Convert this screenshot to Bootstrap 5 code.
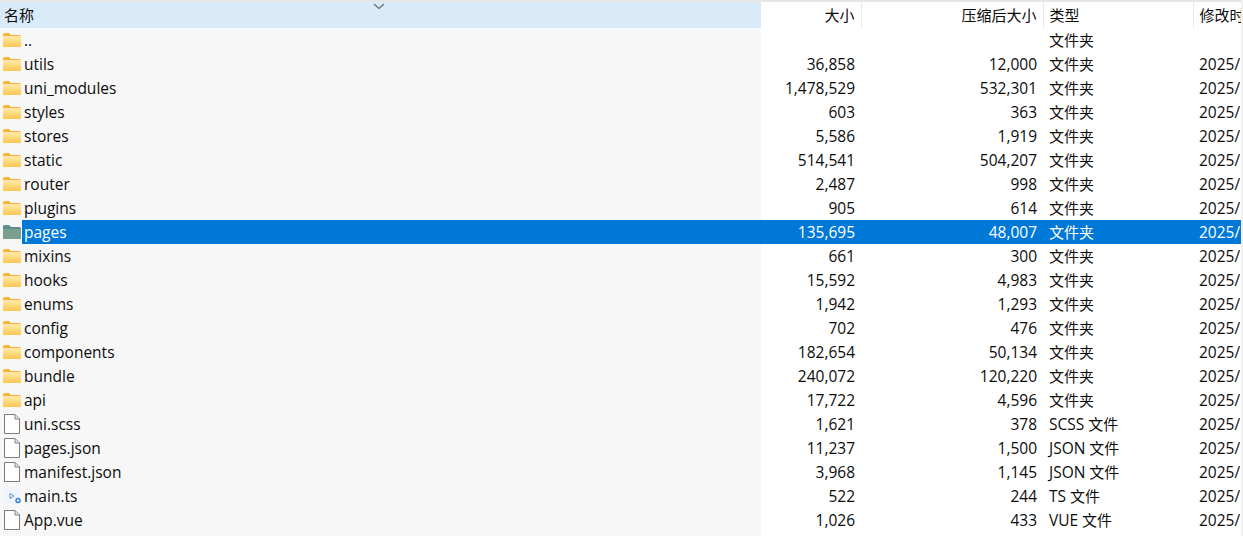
<!DOCTYPE html>
<html lang="zh-CN">
<head>
<meta charset="utf-8">
<title>压缩文件列表</title>
<link rel="stylesheet" href="https://cdn.jsdelivr.net/npm/bootstrap@5.3.0/dist/css/bootstrap.min.css">
<style>
html,body{height:536px;overflow:hidden;background:#fff}
body{font-family:"Open Sans","Noto Sans CJK SC",sans-serif;font-size:15px;color:#000}
.listing{width:1241px;table-layout:fixed;border-collapse:collapse;margin:0;position:relative}
.listing th,.listing td{padding:0 6px;height:24px;line-height:24px;white-space:nowrap;overflow:hidden;font-weight:400;border:0;background:transparent;color:#0c0c0c}
.listing col.c-name{width:761px}.listing col.c-size{width:100px}.listing col.c-comp{width:182px}.listing col.c-type{width:150px}.listing col.c-date{width:48px}
.listing thead th{height:26px;line-height:26px;border-right:1px solid #e8e8e8}
.listing thead th:last-child{border-right:0}
.listing thead th.h-name{background:#d9ebf9;border-right:0;padding-left:4px;position:relative}
.top-rule{height:2px;background:#e5e5e5;width:1241px}
.listing td.n{background:#f7f7f7;padding:0}
.listing td.num,.listing td.dt,.nm,.lat{font-size:15.5px}
.cellin{display:flex;align-items:center;height:24px}
.ico{width:22px;flex:none;display:flex;justify-content:flex-start;padding-left:3px}
.nm{padding-left:2px}
.num{text-align:right}
.listing tr.sel td{background:#0078d7;color:#fff}
.listing tr.sel td.n{background:linear-gradient(to right,#f7f7f7 22px,#0078d7 22px)}
.sort{position:absolute;left:373px;top:1px}
.edge{position:absolute;left:1241px;top:0;width:2px;height:536px;background:#f0f0f0}
</style>
</head>
<body>
<svg width="0" height="0" class="d-block position-absolute">
<defs>
<linearGradient id="fg" x1="0" y1="0" x2="0" y2="1"><stop offset="0" stop-color="#ffe9a6"/><stop offset="1" stop-color="#fcc64e"/></linearGradient>
<symbol id="folder" viewBox="0 0 18 16">
<path d="M0 2.5Q0 1 1.5 1H6L8 3H16.5Q18 3 18 4.5V14Q18 15 17 15H1Q0 15 0 14Z" fill="#f6b73c"/>
<path d="M0 5H18V14Q18 15 17 15H1Q0 15 0 14Z" fill="url(#fg)"/>
<path d="M0 4.6H18" stroke="#fff3c9" stroke-width=".8"/>
</symbol>
<symbol id="folder-sel" viewBox="0 0 18 16">
<path d="M0 2.5Q0 1 1.5 1H6L8 3H16.5Q18 3 18 4.5V14Q18 15 17 15H1Q0 15 0 14Z" fill="#5f8d8e"/>
<path d="M0 5H18V14Q18 15 17 15H1Q0 15 0 14Z" fill="#7b9f8f"/>
</symbol>
<symbol id="doc" viewBox="0 0 18 20">
<path d="M1.5.5H12L16.5 5V19.5H1.5Z" fill="#fff" stroke="#7d7d7d"/>
<path d="M12 .5V5H16.5" fill="none" stroke="#7d7d7d"/>
</symbol>
<symbol id="ts" viewBox="0 0 18 20">
<path d="M1 1H13L17 5V18H1Z" fill="#f0f5fc"/>
<path d="M7 7.5L11 10L7 12.5Z" fill="none" stroke="#5b8fd6"/>
<circle cx="15" cy="14.5" r="2" fill="#fff" stroke="#2f7bd9" stroke-width="1.4"/>
</symbol>
</defs>
</svg>
<div class="top-rule"></div>
<table class="table table-borderless listing">
<colgroup><col class="c-name"><col class="c-size"><col class="c-comp"><col class="c-type"><col class="c-date"></colgroup>
<thead>
<tr>
<th class="h-name">名称<svg class="sort" width="12" height="7" viewBox="0 0 12 7"><path d="M1 1L6 5.5L11 1" fill="none" stroke="#5f6b76" stroke-width="1.1"/></svg></th>
<th class="num">大小</th><th class="num">压缩后大小</th><th>类型</th><th>修改时</th>
</tr>
</thead>
<tbody>
<tr><td class="n"><div class="cellin"><span class="ico"><svg width="18" height="16"><use href="#folder"/></svg></span><span class="nm">..</span></div></td><td class="num"></td><td class="num"></td><td>文件夹</td><td class="dt"></td></tr>
<tr><td class="n"><div class="cellin"><span class="ico"><svg width="18" height="16"><use href="#folder"/></svg></span><span class="nm">utils</span></div></td><td class="num">36,858</td><td class="num">12,000</td><td>文件夹</td><td class="dt">2025/</td></tr>
<tr><td class="n"><div class="cellin"><span class="ico"><svg width="18" height="16"><use href="#folder"/></svg></span><span class="nm">uni_modules</span></div></td><td class="num">1,478,529</td><td class="num">532,301</td><td>文件夹</td><td class="dt">2025/</td></tr>
<tr><td class="n"><div class="cellin"><span class="ico"><svg width="18" height="16"><use href="#folder"/></svg></span><span class="nm">styles</span></div></td><td class="num">603</td><td class="num">363</td><td>文件夹</td><td class="dt">2025/</td></tr>
<tr><td class="n"><div class="cellin"><span class="ico"><svg width="18" height="16"><use href="#folder"/></svg></span><span class="nm">stores</span></div></td><td class="num">5,586</td><td class="num">1,919</td><td>文件夹</td><td class="dt">2025/</td></tr>
<tr><td class="n"><div class="cellin"><span class="ico"><svg width="18" height="16"><use href="#folder"/></svg></span><span class="nm">static</span></div></td><td class="num">514,541</td><td class="num">504,207</td><td>文件夹</td><td class="dt">2025/</td></tr>
<tr><td class="n"><div class="cellin"><span class="ico"><svg width="18" height="16"><use href="#folder"/></svg></span><span class="nm">router</span></div></td><td class="num">2,487</td><td class="num">998</td><td>文件夹</td><td class="dt">2025/</td></tr>
<tr><td class="n"><div class="cellin"><span class="ico"><svg width="18" height="16"><use href="#folder"/></svg></span><span class="nm">plugins</span></div></td><td class="num">905</td><td class="num">614</td><td>文件夹</td><td class="dt">2025/</td></tr>
<tr class="sel"><td class="n"><div class="cellin"><span class="ico"><svg width="18" height="16"><use href="#folder-sel"/></svg></span><span class="nm">pages</span></div></td><td class="num">135,695</td><td class="num">48,007</td><td>文件夹</td><td class="dt">2025/</td></tr>
<tr><td class="n"><div class="cellin"><span class="ico"><svg width="18" height="16"><use href="#folder"/></svg></span><span class="nm">mixins</span></div></td><td class="num">661</td><td class="num">300</td><td>文件夹</td><td class="dt">2025/</td></tr>
<tr><td class="n"><div class="cellin"><span class="ico"><svg width="18" height="16"><use href="#folder"/></svg></span><span class="nm">hooks</span></div></td><td class="num">15,592</td><td class="num">4,983</td><td>文件夹</td><td class="dt">2025/</td></tr>
<tr><td class="n"><div class="cellin"><span class="ico"><svg width="18" height="16"><use href="#folder"/></svg></span><span class="nm">enums</span></div></td><td class="num">1,942</td><td class="num">1,293</td><td>文件夹</td><td class="dt">2025/</td></tr>
<tr><td class="n"><div class="cellin"><span class="ico"><svg width="18" height="16"><use href="#folder"/></svg></span><span class="nm">config</span></div></td><td class="num">702</td><td class="num">476</td><td>文件夹</td><td class="dt">2025/</td></tr>
<tr><td class="n"><div class="cellin"><span class="ico"><svg width="18" height="16"><use href="#folder"/></svg></span><span class="nm">components</span></div></td><td class="num">182,654</td><td class="num">50,134</td><td>文件夹</td><td class="dt">2025/</td></tr>
<tr><td class="n"><div class="cellin"><span class="ico"><svg width="18" height="16"><use href="#folder"/></svg></span><span class="nm">bundle</span></div></td><td class="num">240,072</td><td class="num">120,220</td><td>文件夹</td><td class="dt">2025/</td></tr>
<tr><td class="n"><div class="cellin"><span class="ico"><svg width="18" height="16"><use href="#folder"/></svg></span><span class="nm">api</span></div></td><td class="num">17,722</td><td class="num">4,596</td><td>文件夹</td><td class="dt">2025/</td></tr>
<tr><td class="n"><div class="cellin"><span class="ico"><svg width="18" height="20"><use href="#doc"/></svg></span><span class="nm">uni.scss</span></div></td><td class="num">1,621</td><td class="num">378</td><td><span class="lat">SCSS</span> 文件</td><td class="dt">2025/</td></tr>
<tr><td class="n"><div class="cellin"><span class="ico"><svg width="18" height="20"><use href="#doc"/></svg></span><span class="nm">pages.json</span></div></td><td class="num">11,237</td><td class="num">1,500</td><td><span class="lat">JSON</span> 文件</td><td class="dt">2025/</td></tr>
<tr><td class="n"><div class="cellin"><span class="ico"><svg width="18" height="20"><use href="#doc"/></svg></span><span class="nm">manifest.json</span></div></td><td class="num">3,968</td><td class="num">1,145</td><td><span class="lat">JSON</span> 文件</td><td class="dt">2025/</td></tr>
<tr><td class="n"><div class="cellin"><span class="ico"><svg width="18" height="20"><use href="#ts"/></svg></span><span class="nm">main.ts</span></div></td><td class="num">522</td><td class="num">244</td><td><span class="lat">TS</span> 文件</td><td class="dt">2025/</td></tr>
<tr><td class="n"><div class="cellin"><span class="ico"><svg width="18" height="20"><use href="#doc"/></svg></span><span class="nm">App.vue</span></div></td><td class="num">1,026</td><td class="num">433</td><td><span class="lat">VUE</span> 文件</td><td class="dt">2025/</td></tr>
<tr><td class="n"></td><td></td><td></td><td></td><td></td></tr>
</tbody>
</table>
<div class="edge"></div>
<script src="https://cdn.jsdelivr.net/npm/bootstrap@5.3.0/dist/js/bootstrap.bundle.min.js"></script>
</body>
</html>
